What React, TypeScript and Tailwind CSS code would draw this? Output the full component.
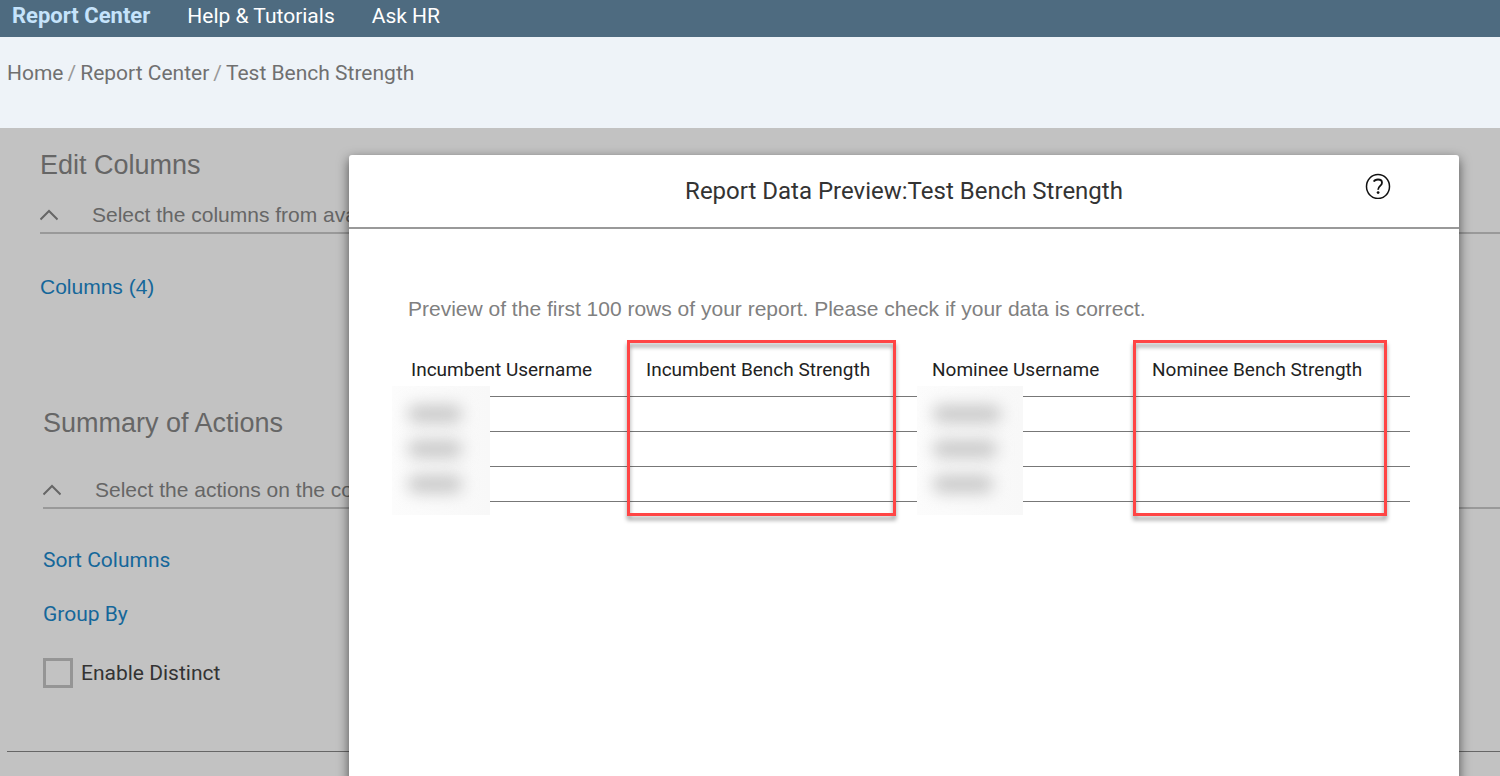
import React, { useState } from "react";

const NAV = [
    { label: "Report Center", active: true },
    { label: "Help & Tutorials", active: false },
    { label: "Ask HR", active: false },
];

const CRUMBS = ["Home", "Report Center", "Test Bench Strength"];

const COLUMNS = [
    { label: "Incumbent Username", width: "w-[235px]", mask: "left-[-16px] w-[98px]", bars: ["w-[54px]", "w-[54px]", "w-[54px]"] },
    { label: "Incumbent Bench Strength", width: "w-[286px]", highlight: "w-[269px]" },
    { label: "Nominee Username", width: "w-[220px]", mask: "left-[-12px] w-[106px]", bars: ["w-[68px]", "w-[64px]", "w-[60px]"] },
    { label: "Nominee Bench Strength", width: "", highlight: "w-[254px]" },
];

function SectionToggle({ text }: { text: string }) {
    return (
        <button type="button" className="flex h-9 w-full items-center border-b-2 border-[#999] text-left font-['Liberation_Sans',sans-serif] leading-8 text-[#666]">
            <svg width="18" height="12" viewBox="0 0 18 12" fill="none" stroke="currentColor" strokeWidth="2" className="shrink-0">
                <path d="M0.5 10.5 9 2l8.500 8.500" />
            </svg>
            <span className="ml-[34px] whitespace-nowrap">{text}</span>
        </button>
    );
}

function HelpIcon() {
    return (
        <svg width="26" height="26" viewBox="0 0 26 26" fill="none" stroke="#111" strokeWidth="1.500">
            <ellipse cx="13" cy="13.500" rx="11.500" ry="12" />
            <path d="M8.800 8.600C9.500 7 11 6.500 13 6.500c2.400 0 4 1.200 4 3.200 0 3.200-3.900 3.300-3.900 7" strokeWidth="1.800" />
            <circle cx="13.100" cy="19.600" r="1.400" fill="#111" stroke="none" />
        </svg>
    );
}

function PreviewTable() {
    return (
        <table className="w-full table-fixed border-collapse text-left">
            <thead>
                <tr className="h-[52px] border-b border-[#777]">
                    {COLUMNS.map((col) => (
                        <th key={col.label} scope="col" className={`relative pl-[3px] text-[19px] leading-6 font-normal whitespace-nowrap text-[#222] ${col.width}`}>
                            {col.label}
                            {/* Callout around the bench strength columns */}
                            {col.highlight && (
                                <span className={`absolute top-[-4px] left-[-16px] h-44 border-3 border-[#ff4545] drop-shadow-[0_4px_2px_rgba(0,0,0,0.4)] ${col.highlight}`} />
                            )}
                            {/* Masked usernames */}
                            {col.mask && (
                                <span className={`absolute top-[42px] z-10 flex h-[129px] flex-col gap-[17px] overflow-hidden bg-linear-to-r from-[#fcfcfc] to-[#f8f8f8] pt-[19px] pl-4 ${col.mask}`}>
                                    {col.bars.map((bar, i) => (
                                        <span key={i} className={`h-[18px] shrink-0 rounded-lg bg-[#c8c8c8] blur-[8px] ${bar}`} />
                                    ))}
                                </span>
                            )}
                        </th>
                    ))}
                </tr>
            </thead>
            <tbody>
                {[1, 2, 3].map((row) => (
                    <tr key={row} className="h-[35px] border-b border-[#777]">
                        {COLUMNS.map((col) => (
                            <td key={col.label} />
                        ))}
                    </tr>
                ))}
            </tbody>
        </table>
    );
}

export default function App() {
    const [distinct, setDistinct] = useState(false);

    return (
        <div className="flex h-screen flex-col overflow-hidden font-['Roboto','Noto_Sans',sans-serif] text-[21px]">
            <nav className="flex h-[37px] shrink-0 items-baseline gap-[37px] bg-[#4e6b80] px-3 leading-8">
                {NAV.map((item) => (
                    <a key={item.label} href="#" className={item.active ? "text-[22px] font-bold text-[#c5e3fb]" : "text-white"}>
                        {item.label}
                    </a>
                ))}
            </nav>

            <div className="flex h-[91px] shrink-0 items-start gap-1 bg-[#eef3f8] px-[7px] pt-5 leading-8 text-[#707070]">
                {CRUMBS.map((crumb, i) => (
                    <React.Fragment key={crumb}>
                        {i > 0 && <span className="text-[#999]">/</span>}
                        <a href="#">{crumb}</a>
                    </React.Fragment>
                ))}
            </div>

            <main className="relative flex-1 overflow-hidden bg-[#c2c2c2]">
                <section className="pt-[21px] pl-10">
                    <h2 className="font-['Liberation_Sans',sans-serif] text-[27px] leading-8 text-[#666]">Edit Columns</h2>
                    <div className="mt-[17px]">
                        <SectionToggle text="Select the columns from available tables" />
                    </div>
                    <div className="mt-[37px] leading-8">
                        <a href="#" className="font-['Liberation_Sans',sans-serif] text-[#15679a]">
                            Columns (4)
                        </a>
                    </div>
                </section>

                <section className="pt-[104px] pl-[43px]">
                    <h2 className="font-['Liberation_Sans',sans-serif] text-[27px] leading-8 text-[#666]">Summary of Actions</h2>
                    <div className="mt-[34px]">
                        <SectionToggle text="Select the actions on the columns" />
                    </div>
                    <div className="mt-[35px] flex flex-col items-start gap-[22px] leading-8 text-[#15679a]">
                        <a href="#">Sort Columns</a>
                        <a href="#">Group By</a>
                    </div>
                    <label className="mt-[27px] flex items-center gap-2 leading-8 text-[#333]">
                        <input
                            type="checkbox"
                            checked={distinct}
                            onChange={(e) => setDistinct(e.target.checked)}
                            className="size-[30px] appearance-none border-3 border-[#959595] checked:bg-[#15679a]"
                        />
                        Enable Distinct
                    </label>
                </section>

                <hr className="mt-[62px] ml-[7px] border-t border-[#666]" />

                {/* Preview dialog */}
                <div role="dialog" aria-labelledby="preview-title" className="absolute top-[27px] right-[41px] -bottom-2 left-[349px] rounded-t-[3px] bg-white shadow-[0_4px_12px_rgba(0,0,0,0.6)]">
                    <header className="relative flex h-[74px] items-center justify-center border-b-2 border-[#999]">
                        <h1 id="preview-title" className="text-2xl text-[#333]">Report Data Preview:Test Bench Strength</h1>
                        <button type="button" aria-label="Help" className="absolute top-[18px] right-[68px]">
                            <HelpIcon />
                        </button>
                    </header>
                    <div className="pt-16 pr-[49px] pl-[59px]">
                        <p className="mb-[19px] font-['Liberation_Sans',sans-serif] leading-8 text-[#808080]">
                            Preview of the first 100 rows of your report. Please check if your data is correct.
                        </p>
                        <PreviewTable />
                    </div>
                </div>
            </main>
        </div>
    );
}
